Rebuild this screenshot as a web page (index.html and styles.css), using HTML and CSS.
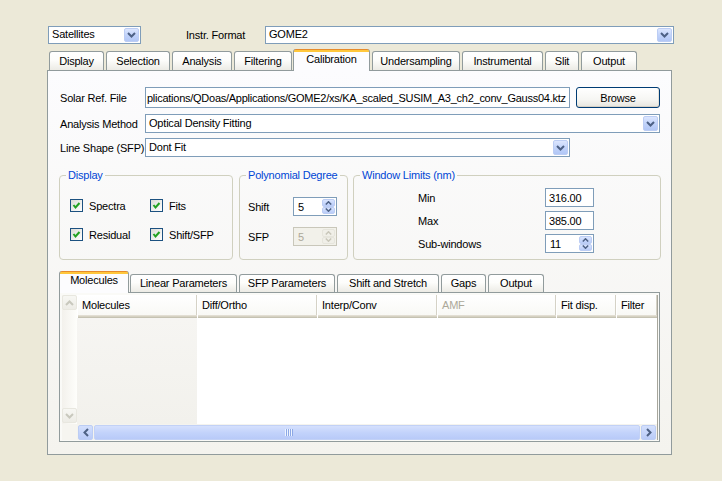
FILE: index.html
```html
<!DOCTYPE html>
<html>
<head>
<meta charset="utf-8">
<title>QDoas Calibration</title>
<link rel="stylesheet" href="styles.css">
</head>
<body>
<div class="window">
  <div class="toprow">
    <div class="combo combo-sat">
      <span class="combo-text">Satellites</span>
      <span class="dropbtn"><svg width="9" height="6" viewBox="0 0 9 6"><polyline points="1,1 4.5,4.5 8,1" fill="none" stroke="#4D6185" stroke-width="2"/></svg></span>
    </div>
    <span class="instr-label">Instr. Format</span>
    <div class="combo combo-instr">
      <span class="combo-text">GOME2</span>
      <span class="dropbtn"><svg width="9" height="6" viewBox="0 0 9 6"><polyline points="1,1 4.5,4.5 8,1" fill="none" stroke="#4D6185" stroke-width="2"/></svg></span>
    </div>
  </div>

  <div class="tabbar">
    <div class="tab t-display">Display</div>
    <div class="tab t-selection">Selection</div>
    <div class="tab t-analysis">Analysis</div>
    <div class="tab t-filtering">Filtering</div>
    <div class="tab tab-sel t-calibration">Calibration</div>
    <div class="tab t-under">Undersampling</div>
    <div class="tab t-instr">Instrumental</div>
    <div class="tab t-slit">Slit</div>
    <div class="tab t-output">Output</div>
  </div>

  <div class="panel">
    <div class="frow frow-solar">
      <span class="flabel">Solar Ref. File</span>
      <div class="input path"><span>plications/QDoas/Applications/GOME2/xs/KA_scaled_SUSIM_A3_ch2_conv_Gauss04.ktz</span></div>
      <div class="btn">Browse</div>
    </div>
    <div class="frow frow-analysis">
      <span class="flabel">Analysis Method</span>
      <div class="combo combo-analysis">
        <span class="combo-text">Optical Density Fitting</span>
        <span class="dropbtn"><svg width="9" height="6" viewBox="0 0 9 6"><polyline points="1,1 4.5,4.5 8,1" fill="none" stroke="#4D6185" stroke-width="2"/></svg></span>
      </div>
    </div>
    <div class="frow frow-line">
      <span class="flabel">Line Shape (SFP)</span>
      <div class="combo combo-line">
        <span class="combo-text">Dont Fit</span>
        <span class="dropbtn"><svg width="9" height="6" viewBox="0 0 9 6"><polyline points="1,1 4.5,4.5 8,1" fill="none" stroke="#4D6185" stroke-width="2"/></svg></span>
      </div>
    </div>

    <div class="groups">
      <fieldset class="group g-display">
        <legend>Display</legend>
        <div class="checks">
          <div class="chk"><span class="cbox"><svg width="11" height="11" viewBox="0 0 11 11"><polyline points="2.5,5 4.5,7.5 8.5,3" fill="none" stroke="#21A121" stroke-width="2"/></svg></span>Spectra</div>
          <div class="chk"><span class="cbox"><svg width="11" height="11" viewBox="0 0 11 11"><polyline points="2.5,5 4.5,7.5 8.5,3" fill="none" stroke="#21A121" stroke-width="2"/></svg></span>Fits</div>
          <div class="chk"><span class="cbox"><svg width="11" height="11" viewBox="0 0 11 11"><polyline points="2.5,5 4.5,7.5 8.5,3" fill="none" stroke="#21A121" stroke-width="2"/></svg></span>Residual</div>
          <div class="chk"><span class="cbox"><svg width="11" height="11" viewBox="0 0 11 11"><polyline points="2.5,5 4.5,7.5 8.5,3" fill="none" stroke="#21A121" stroke-width="2"/></svg></span>Shift/SFP</div>
        </div>
      </fieldset>
      <fieldset class="group g-poly">
        <legend>Polynomial Degree</legend>
        <div class="poly-grid">
          <span class="glabel">Shift</span>
          <div class="spin">
            <span class="spin-val">5</span>
            <span class="spin-btns">
              <span class="sbtn"><svg width="7" height="4" viewBox="0 0 7 4"><polyline points="0.8,3.5 3.5,0.8 6.2,3.5" fill="none" stroke="#4D6185" stroke-width="1.5"/></svg></span>
              <span class="sbtn"><svg width="7" height="4" viewBox="0 0 7 4"><polyline points="0.8,0.5 3.5,3.2 6.2,0.5" fill="none" stroke="#4D6185" stroke-width="1.5"/></svg></span>
            </span>
          </div>
          <span class="glabel">SFP</span>
          <div class="spin spin-dis">
            <span class="spin-val">5</span>
            <span class="spin-btns">
              <span class="sbtn"><svg width="7" height="4" viewBox="0 0 7 4"><polyline points="0.8,3.5 3.5,0.8 6.2,3.5" fill="none" stroke="#C9C7BA" stroke-width="1.5"/></svg></span>
              <span class="sbtn"><svg width="7" height="4" viewBox="0 0 7 4"><polyline points="0.8,0.5 3.5,3.2 6.2,0.5" fill="none" stroke="#C9C7BA" stroke-width="1.5"/></svg></span>
            </span>
          </div>
        </div>
      </fieldset>
      <fieldset class="group g-window">
        <legend>Window Limits (nm)</legend>
        <div class="win-grid">
          <span class="glabel">Min</span>
          <div class="input num">316.00</div>
          <span class="glabel">Max</span>
          <div class="input num">385.00</div>
          <span class="glabel">Sub-windows</span>
          <div class="spin spin-win">
            <span class="spin-val">11</span>
            <span class="spin-btns">
              <span class="sbtn"><svg width="7" height="4" viewBox="0 0 7 4"><polyline points="0.8,3.5 3.5,0.8 6.2,3.5" fill="none" stroke="#4D6185" stroke-width="1.5"/></svg></span>
              <span class="sbtn"><svg width="7" height="4" viewBox="0 0 7 4"><polyline points="0.8,0.5 3.5,3.2 6.2,0.5" fill="none" stroke="#4D6185" stroke-width="1.5"/></svg></span>
            </span>
          </div>
        </div>
      </fieldset>
    </div>

    <div class="subtabbar">
      <div class="tab tab-sel st-mol">Molecules</div>
      <div class="tab st-lin">Linear Parameters</div>
      <div class="tab st-sfp">SFP Parameters</div>
      <div class="tab st-shift">Shift and Stretch</div>
      <div class="tab st-gaps">Gaps</div>
      <div class="tab st-out">Output</div>
    </div>
    <div class="subpanel">
      <div class="tbl">
        <div class="vscroll">
          <span class="sarrow sarrow-dis"><svg width="9" height="6" viewBox="0 0 9 6"><polyline points="1,5 4.5,1.5 8,5" fill="none" stroke="#C8C8BD" stroke-width="2"/></svg></span>
          <span class="sarrow sarrow-dis"><svg width="9" height="6" viewBox="0 0 9 6"><polyline points="1,1 4.5,4.5 8,1" fill="none" stroke="#C8C8BD" stroke-width="2"/></svg></span>
        </div>
        <div class="tmain">
          <div class="thead">
            <div class="th c1">Molecules</div>
            <div class="th c2">Diff/Ortho</div>
            <div class="th c3">Interp/Conv</div>
            <div class="th c4 th-dim">AMF</div>
            <div class="th c5">Fit disp.</div>
            <div class="th c6">Filter</div>
          </div>
          <div class="tbody">
            <div class="tcol-first"></div>
            <div class="tcol-rest"></div>
          </div>
        </div>
        <div class="corner"></div>
        <div class="hscroll">
          <span class="sarrow"><svg width="6" height="9" viewBox="0 0 6 9"><polyline points="5,1 1.5,4.5 5,8" fill="none" stroke="#4D6185" stroke-width="2"/></svg></span>
          <span class="thumb"><span class="grip"></span></span>
          <span class="sarrow"><svg width="6" height="9" viewBox="0 0 6 9"><polyline points="1,1 4.5,4.5 1,8" fill="none" stroke="#4D6185" stroke-width="2"/></svg></span>
        </div>
      </div>
    </div>
  </div>
</div>
</body>
</html>
```

FILE: styles.css
```css
* { box-sizing: border-box; }
html, body { margin: 0; padding: 0; }
body {
  width: 722px;
  height: 481px;
  overflow: hidden;
  background: #ECE9D8;
  font-family: "Liberation Sans", Arial, sans-serif;
  font-size: 11px;
  letter-spacing: -0.2px;
  color: #000;
}
.window { padding: 25px 0 0 47px; }

/* top row */
.toprow { display: flex; align-items: center; height: 19px; }
.combo {
  display: flex;
  align-items: center;
  height: 19px;
  border: 1px solid #7F9DB9;
  background: #fff;
  padding: 1px;
}
.combo-text { flex: 1; padding-left: 2px; white-space: nowrap; overflow: hidden; line-height: 15px; }
.dropbtn {
  width: 15px;
  height: 15px;
  flex: none;
  border: 1px solid #BCCDF4;
  border-radius: 2px;
  background: linear-gradient(#DCE6FE, #C0D2FA 55%, #B2C7F6);
  display: flex;
  align-items: center;
  justify-content: center;
}
.toprow .combo { height: 18px; }
.toprow .dropbtn { height: 14px; }
.combo-sat { width: 93px; margin-left: 1px; }
.instr-label { margin-left: 45px; width: 79px; }
.combo-instr { width: 409px; }

/* tabs */
.tabbar, .subtabbar {
  display: flex;
  align-items: flex-end;
  height: 21px;
}
.tabbar { margin-top: 5px; padding-left: 2px; }
.tab {
  height: 19px;
  margin-right: 2px;
  border: 1px solid #919B9C;
  border-bottom: none;
  border-radius: 3px 3px 0 0;
  background: linear-gradient(#FFFFFF, #FDFDFB 45%, #ECEBE5);
  display: flex;
  align-items: center;
  justify-content: center;
  white-space: nowrap;
  flex: none;
  padding-bottom: 1px;
}
.tab-sel {
  position: relative;
  z-index: 2;
  height: 22px;
  margin-bottom: -1px;
  margin-left: -1px;
  border-top: none;
  background: linear-gradient(#E68B2C 0, #E68B2C 1px, #FFC73C 1px, #FFC73C 3px, #FCFCFE 3px);
  padding-bottom: 3px;
}
.t-display { width: 55px; }
.t-selection { width: 64px; }
.t-analysis { width: 60px; }
.t-filtering { width: 58px; }
.t-calibration { width: 77px; }
.t-under { width: 88px; }
.t-instr { width: 81px; }
.t-slit { width: 34px; }
.t-output { width: 56px; }

.panel {
  width: 625px;
  height: 385px;
  border: 1px solid #919B9C;
  background: linear-gradient(#FCFCFE, #F4F3EE);
  padding: 16px 0 0 12px;
}

/* form rows */
.frow { display: flex; align-items: center; }
.flabel { width: 85px; flex: none; white-space: nowrap; }
.input {
  border: 1px solid #7F9DB9;
  background: #fff;
  display: flex;
  align-items: center;
  white-space: nowrap;
  overflow: hidden;
}
.path {
  width: 425px;
  height: 21px;
  padding-left: 1px;
  letter-spacing: -0.26px;
}
.btn {
  width: 84px;
  height: 21px;
  margin-left: 6px;
  border: 1px solid #003C74;
  border-radius: 3px;
  background: linear-gradient(#FFFFFF, #F6F6F3 60%, #E6E5DE);
  box-shadow: inset 0 -1px 0 #D6D0C5, inset -1px 0 0 #E3E1D9;
  display: flex;
  align-items: center;
  justify-content: center;
}
.frow-analysis { margin-top: 6px; }
.frow-line { margin-top: 5px; }
.combo-analysis { width: 515px; }
.combo-line { width: 425px; }

/* group boxes */
.groups { display: flex; margin-top: 12px; margin-left: -1px; }
.group {
  margin: 0;
  padding: 0;
  min-width: 0;
  height: 91px;
  border: 1px solid #D0D0BF;
  border-radius: 4px;
}
.group legend {
  margin-left: 6px;
  padding: 0 2px;
  color: #0046D5;
  line-height: 13px;
}
.g-display { width: 174px; }
.g-poly { width: 109px; margin-left: 6px; }
.g-window { width: 308px; margin-left: 5px; }

.checks {
  display: grid;
  grid-template-columns: 80px auto;
  row-gap: 16px;
  padding: 17px 0 0 10px;
}
.chk { display: flex; align-items: center; gap: 6px; height: 13px; white-space: nowrap; }
.cbox {
  width: 13px;
  height: 13px;
  flex: none;
  border: 1px solid #1C5180;
  background: linear-gradient(135deg, #DCDCD7, #FFFFFF);
  display: flex;
  align-items: center;
  justify-content: center;
}

.glabel { white-space: nowrap; }
.poly-grid {
  display: grid;
  grid-template-columns: 45px 44px;
  row-gap: 11px;
  align-items: center;
  padding: 15px 0 0 8px;
}
.spin {
  width: 44px;
  height: 19px;
  border: 1px solid #7F9DB9;
  background: #fff;
  display: flex;
  align-items: stretch;
  padding: 1px 1px 1px 0;
}
.spin-val { flex: 1; padding-left: 4px; display: flex; align-items: center; }
.spin-btns { width: 13px; display: flex; flex-direction: column; }
.sbtn {
  flex: 1;
  border: 1px solid #BCCDF4;
  border-radius: 2px;
  background: linear-gradient(#D9E4FE, #B9CCF8);
  display: flex;
  align-items: center;
  justify-content: center;
}
.spin-dis { border-color: #C9C7BA; background: #F2F1EA; color: #ACA899; }
.spin-dis .sbtn { border-color: #E6E5DC; background: #F0EFE8; }

.win-grid {
  display: grid;
  grid-template-columns: 127px 49px;
  row-gap: 4px;
  align-items: center;
  padding: 6px 0 0 64px;
}
.num { width: 49px; height: 19px; padding-left: 3px; }
.spin-win { width: 49px; }

/* sub tabs */
.subtabbar { margin-top: 11px; margin-left: -1px; }
.subtabbar .tab { height: 18px; }
.subtabbar .tab-sel { height: 22px; margin-left: 0; margin-right: 1px; padding-bottom: 4px; }
.st-mol { width: 70px; }
.st-lin { width: 107px; }
.st-sfp { width: 96px; }
.st-shift { width: 102px; }
.st-gaps { width: 45px; }
.st-out { width: 56px; }

.subpanel {
  width: 601px;
  height: 150px;
  margin-left: -1px;
  border: 1px solid #919B9C;
  background: #FAFAF7;
  padding: 2px 1px 1px 2px;
}
.tbl {
  height: 100%;
  display: grid;
  grid-template-columns: 15px 1fr;
  grid-template-rows: 1fr 16px;
  border-right: 1px solid #A7A69C;
}
.vscroll {
  grid-column: 1;
  grid-row: 1;
  background: linear-gradient(90deg, #F3F1EC, #FEFEFB);
  display: flex;
  flex-direction: column;
  justify-content: space-between;
  padding-bottom: 1px;
}
.sarrow {
  width: 15px;
  height: 15px;
  flex: none;
  border: 1px solid #BCCDF4;
  border-radius: 2px;
  background: linear-gradient(#D3DFFD, #B9CBF8);
  display: flex;
  align-items: center;
  justify-content: center;
}
.sarrow-dis { border-color: #E8E7DF; background: linear-gradient(#F7F7F3, #EDECE6); }
.tmain { grid-column: 2; grid-row: 1; display: flex; flex-direction: column; }
.thead { display: flex; height: 23px; flex: none; }
.th {
  height: 23px;
  background: linear-gradient(#FFFFFF, #F8F8F4);
  box-shadow: inset 0 -1px 0 #C5C2B2, inset 0 -2px 0 #D6D2C2, inset 0 -3px 0 #E2DED3, inset -1px 0 0 #D5D2C6;
  border-left: 1px solid #FFFFFF;
  padding: 0 0 3px 4px;
  display: flex;
  align-items: center;
  white-space: nowrap;
  overflow: hidden;
  flex: none;
}
.c1 { width: 120px; }
.c2 { width: 120px; }
.c3 { width: 120px; }
.c4 { width: 119px; }
.c5 { width: 60px; }
.c6 { flex: 1; }
.th-dim { color: #ACA899; }
.tbody { flex: 1; display: flex; }
.tcol-first { width: 120px; background: linear-gradient(#F6F5F2, #F2F1EC); }
.tcol-rest { flex: 1; background: #FFFFFF; }
.corner { grid-column: 1; grid-row: 2; background: #F6F5F0; }
.hscroll {
  grid-column: 2;
  grid-row: 2;
  display: flex;
  align-items: center;
  padding: 0 1px;
  background: #F4F3EE;
}
.thumb {
  flex: 1;
  height: 15px;
  margin: 0 1px;
  border: 1px solid #C2D1F6;
  border-radius: 2px;
  background: linear-gradient(#D5E0FD, #C3D3FB 50%, #B8CAF8);
  display: flex;
  align-items: center;
  justify-content: center;
}
.grip {
  width: 8px;
  height: 7px;
  background: repeating-linear-gradient(90deg, #EEF4FE 0, #EEF4FE 1px, #8CA8E6 1px, #8CA8E6 2px);
  margin-left: -156px;
}
```
